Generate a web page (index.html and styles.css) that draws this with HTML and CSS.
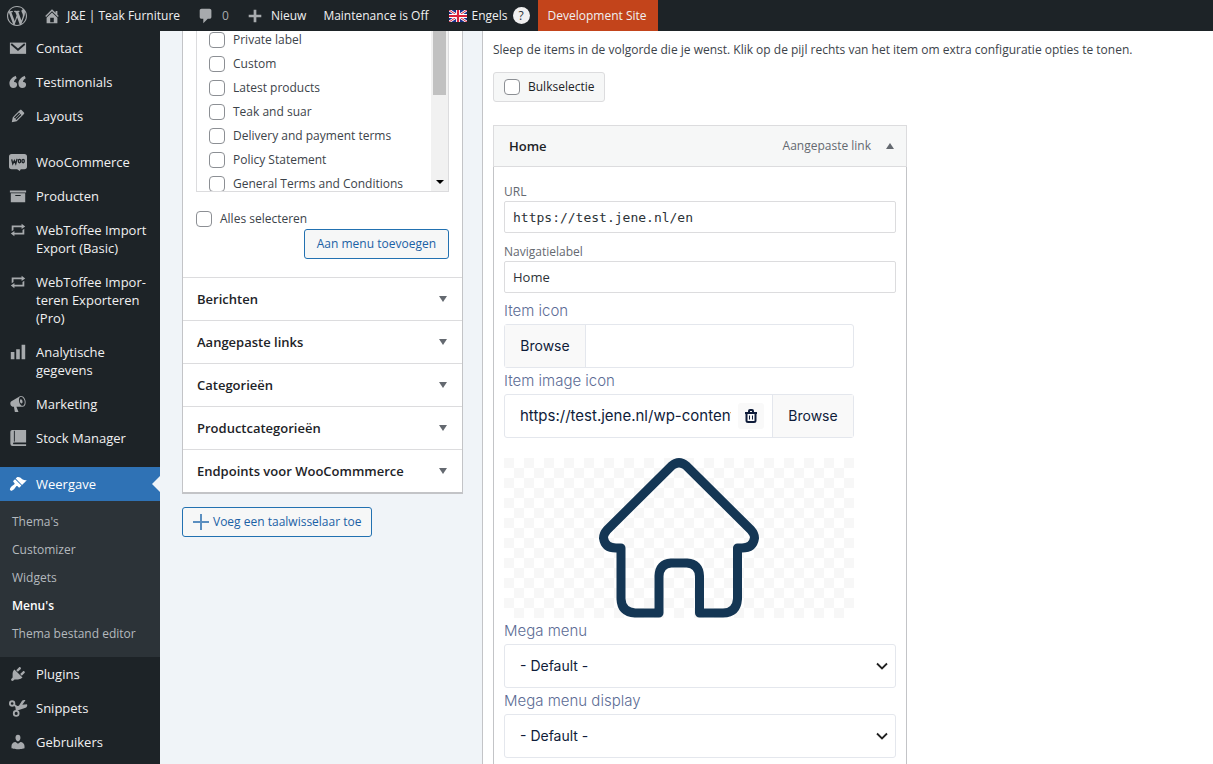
FILE: index.html
```html
<!DOCTYPE html>
<html lang="nl">
<head>
<meta charset="utf-8">
<title>Menu's</title>
<link rel="stylesheet" href="styles.css">
</head>
<body>
<header class="adminbar">
  <a class="bar-item bar-logo" href="#" aria-label="WordPress"><svg class="icon" viewBox="0 0 20 20"><path d="M20 10c0-5.51-4.49-10-10-10C4.48 0 0 4.49 0 10c0 5.52 4.48 10 10 10 5.51 0 10-4.48 10-10zM7.78 15.37L4.37 6.22c.55-.02 1.17-.08 1.17-.08.5-.06.44-1.13-.06-1.11 0 0-1.45.11-2.37.11-.18 0-.37 0-.58-.01C4.12 2.69 6.87 1.11 10 1.11c2.33 0 4.45.87 6.05 2.34-.68-.11-1.65.39-1.65 1.58 0 .74.45 1.36.9 2.1.35.61.55 1.36.55 2.46 0 1.49-1.4 5-1.4 5l-3.03-8.37c.54-.02.82-.17.82-.17.5-.05.44-1.25-.06-1.22 0 0-1.44.12-2.38.12-.87 0-2.33-.12-2.33-.12-.5-.03-.56 1.2-.06 1.22l.92.08 1.26 3.41zM17.41 10c.24-.64.74-1.87.43-4.25.7 1.29 1.05 2.71 1.05 4.25 0 3.29-1.73 6.24-4.4 7.78.97-2.59 1.94-5.2 2.92-7.78zM6.1 18.09C3.12 16.65 1.11 13.53 1.11 10c0-1.3.23-2.48.72-3.59C3.25 10.3 4.67 14.2 6.1 18.09zm4.03-6.63l2.58 6.98c-.86.29-1.76.45-2.71.45-.79 0-1.57-.11-2.29-.33.81-2.38 1.62-4.74 2.42-7.1z"/></svg></a>
  <a class="bar-item bar-site" href="#"><svg class="icon" viewBox="0 0 20 20"><path d="M16 8.5l1.53 1.53-1.06 1.06L10 4.6l-6.47 6.49-1.06-1.06L10 2.5l4 4v-2h2v4zm-6-2.46l6 5.99V18H4v-5.97zM12 17v-5H8v5h4z"/></svg>J&amp;E | Teak Furniture</a>
  <a class="bar-item bar-comments" href="#"><svg class="icon" viewBox="0 0 20 20"><path d="M5 2h9c1.1 0 2 .9 2 2v7c0 1.1-.9 2-2 2h-2l-5 5v-5H5c-1.1 0-2-.9-2-2V4c0-1.1.9-2 2-2z"/></svg><span class="muted">0</span></a>
  <a class="bar-item bar-new" href="#"><svg class="icon" viewBox="0 0 20 20"><path d="M17 8.500v3h-5.500v5.500h-3v-5.500H3v-3h5.500V3h3v5.500z"/></svg>Nieuw</a>
  <a class="bar-item bar-maintenance" href="#">Maintenance is Off</a>
  <a class="bar-item bar-lang" href="#"><svg class="flag" viewBox="0 0 18 12"><path fill="#1b2f8c" d="M0 0h18v12H0z"/><path stroke="#fff" stroke-width="2.600" d="M0 0l18 12M18 0L0 12"/><path stroke="#d8213b" stroke-width="1" d="M0 0l18 12M18 0L0 12"/><path stroke="#fff" stroke-width="4" d="M9 0v12M0 6h18"/><path stroke="#d8213b" stroke-width="2.200" d="M9 0v12M0 6h18"/></svg>Engels<span class="help">?</span></a>
  <a class="bar-item bar-dev" href="#">Development Site</a>
</header>
<div class="shell">
  <nav class="sidebar">
    <ul class="side-list">
      <li><a class="side-item" href="#"><svg class="icon" viewBox="0 0 20 20"><path d="M1 4h18v12.500H1z"/><path class="cut" d="M2.500 5.500L10 12l7.500-6.500"/></svg>Contact</a></li>
      <li><a class="side-item" href="#"><svg class="icon" viewBox="0 0 20 20"><path d="M8.990 13c0-.9-.2-1.500-.6-2-.6-.8-2-1-2.800-.8-.3-1.600 1.200-3.600 3-4.500L7.300 3C3.700 4.700.1 7.700.5 12.100.8 15 2.400 16.700 4.700 16.700c2.500 0 4.290-1.500 4.290-3.700zm10 0c0-.9-.2-1.500-.6-2-.6-.8-2-1-2.800-.8-.3-1.600 1.200-3.600 3-4.500L17.300 3c-3.600 1.700-7.200 4.700-6.800 9.100.3 2.900 1.900 4.600 4.200 4.600 2.500 0 4.290-1.500 4.290-3.700z"/></svg>Testimonials</a></li>
      <li><a class="side-item" href="#"><svg class="icon" viewBox="0 0 20 20"><path d="M13.890 3.390l2.710 2.720c.46.46.42 1.240.03 1.640l-8.010 8.020-5.560 1.160 1.160-5.580s7.600-7.630 7.990-8.030c.39-.39 1.220-.39 1.680.07zm-2.730 2.790l-5.590 5.610 1.110 1.110 5.540-5.650zm-2.970 8.230l5.580-5.600-1.070-1.080-5.590 5.600z"/></svg>Layouts</a></li>
      <li class="sep"><a class="side-item" href="#"><svg class="icon" viewBox="0 0 20 20"><path d="M3 1h14a3 3 0 0 1 3 3v11a3 3 0 0 1-3 3h-4l-1 2-3-2H3a3 3 0 0 1-3-3V4a3 3 0 0 1 3-3z"/><path class="cut woo" d="M3 7l1.200 5L6 8.500 7.500 12 9 6.500"/><ellipse class="cut woo" cx="11.700" cy="9" rx="1.300" ry="2"/><ellipse class="cut woo" cx="15.700" cy="9" rx="1.300" ry="2"/></svg>WooCommerce</a></li>
      <li><a class="side-item" href="#"><svg class="icon" viewBox="0 0 20 20"><path d="M19 4v2H1V4h18zM2 7h16v10H2V7zm11 3V9H7v1h6z"/></svg>Producten</a></li>
      <li><a class="side-item" href="#"><svg class="icon" viewBox="0 0 20 20"><path d="M5 7v3l-2 1.500V5h11V3l4 3.010L14 9V7H5zm10 6v-3l2-1.500V15H6v2l-4-3.010L6 11v2h9z"/></svg>WebToffee Import<br>Export (Basic)</a></li>
      <li><a class="side-item" href="#"><svg class="icon" viewBox="0 0 20 20"><path d="M5 7v3l-2 1.500V5h11V3l4 3.010L14 9V7H5zm10 6v-3l2-1.500V15H6v2l-4-3.010L6 11v2h9z"/></svg>WebToffee Impor-<br>teren Exporteren<br>(Pro)</a></li>
      <li><a class="side-item" href="#"><svg class="icon" viewBox="0 0 20 20"><path d="M18 18V2h-4v16h4zm-6 0V7H8v11h4zm-6 0v-8H2v8h4z"/></svg>Analytische<br>gegevens</a></li>
      <li><a class="side-item" href="#"><svg class="icon" viewBox="0 0 20 20"><path d="M18.150 5.940c.46 1.620.38 3.220-.02 4.480-.42 1.280-1.260 2.180-2.300 2.480-.16.06-.26.06-.4.06-.06.02-.12.02-.18.02-.06.02-.14.02-.22.02h-6.800l2.220 5.500c.02.14-.06.26-.14.34-.08.1-.24.16-.34.16H6.950c-.1 0-.26-.06-.34-.16-.08-.08-.16-.2-.14-.34l-1-5.500H4.250l-.02-.02c-.5.06-1.080-.18-1.540-.62s-.88-1.080-1.060-1.880c-.24-.8-.2-1.560-.02-2.200.18-.62.58-1.080 1.060-1.300l.02-.02 9-5.400c.1-.06.18-.1.24-.16.06-.04.14-.08.24-.12.16-.08.28-.12.5-.18 1.040-.3 2.240.1 3.220.98s1.840 2.240 2.260 3.860zm-2.580 5.980h-.02c.4-.1.74-.34 1.040-.7.58-.7.86-1.760.86-3.040 0-.64-.1-1.300-.28-1.980-.34-1.360-1.020-2.500-1.780-3.240s-1.680-1.100-2.460-.88c-.82.22-1.400.96-1.700 2-.32 1.040-.28 2.360.06 3.720.38 1.360 1 2.500 1.800 3.240.78.740 1.620 1.100 2.480.88zm-2.540-7.080c.22-.04.42-.02.62.04.38.16.76.48 1.020 1s.42 1.200.42 1.780c0 .3-.04.56-.12.8-.18.48-.44.84-.86.94-.34.1-.8-.06-1.140-.4s-.64-.86-.78-1.500c-.18-.62-.12-1.240.02-1.720s.48-.84.82-.94z"/></svg>Marketing</a></li>
      <li><a class="side-item" href="#"><svg class="icon" viewBox="0 0 20 20"><path d="M3.500 1H19v14H5.500a1 1 0 0 0 0 2H19v2H4a2.500 2.500 0 0 1-2.500-2.500V3a2 2 0 0 1 2-2z"/><path class="cut spine" d="M6 2v12"/></svg>Stock Manager</a></li>
      <li class="sep current">
        <a class="side-item active" href="#"><svg class="icon" viewBox="0 0 20 20"><path d="M14.480 11.060L7.410 3.990l1.500-1.500c.5-.56 2.300-.47 3.510.32 1.210.8 1.430 1.280 2.910 2.100 1.180.64 2.450 1.260 4.450.85zm-.71.71L6.700 4.700 4.930 6.470c-.39.39-.39 1.020 0 1.410l1.060 1.060c.39.39.39 1.030 0 1.420-.6.6-1.430 1.110-2.210 1.690-.35.26-.7.53-1.010.84C1.430 14.230.4 16.080 1.400 17.070c.99 1 2.840-.03 4.180-1.360.31-.31.58-.66.85-1.020.57-.78 1.080-1.610 1.690-2.210.39-.39 1.020-.39 1.410 0l1.060 1.060c.39.39 1.020.39 1.410 0z"/></svg>Weergave</a>
        <ul class="submenu">
          <li><a href="#">Thema's</a></li>
          <li><a href="#">Customizer</a></li>
          <li><a href="#">Widgets</a></li>
          <li><a class="selected" href="#">Menu's</a></li>
          <li><a href="#">Thema bestand editor</a></li>
        </ul>
      </li>
      <li><a class="side-item" href="#"><svg class="icon" viewBox="0 0 20 20"><path d="M13.110 4.360L9.870 7.600 8 5.730l3.240-3.240c.35-.34 1.050-.2 1.560.32.52.51.66 1.210.31 1.550zm-8 1.770l.91-1.120 9.010 9.010-1.190.84c-.71.71-2.630 1.160-3.820 1.160H6.140L4.900 17.260c-.59.59-1.540.59-2.120 0-.59-.58-.59-1.530 0-2.120l1.240-1.240v-3.880c0-1.130.4-3.190 1.090-3.890zm7.260 3.970l3.240-3.240c.34-.35 1.040-.21 1.550.31.52.51.66 1.210.31 1.550l-3.240 3.250z"/></svg>Plugins</a></li>
      <li><a class="side-item" href="#"><svg class="icon" viewBox="0 0 20 20"><g fill="none" stroke="#a7aaad" stroke-width="2"><circle cx="3.500" cy="5" r="2.500"/><circle cx="8" cy="16" r="2.700"/><path d="M5.500 6.500L9 9M8.500 13.500l.5-4"/></g><path d="M7 8l4-.5L14.500 2c1-1.200 3-1.300 3.800-.5L14.800 6.500l5.200-.6c.8 1.500-.2 3.400-1.500 3.800l-7.500 2.600-3.500.3z"/></svg>Snippets</a></li>
      <li><a class="side-item" href="#"><svg class="icon" viewBox="0 0 20 20"><path d="M10 9.250c-2.270 0-2.730-3.440-2.730-3.440C7 4.020 7.820 2 9.970 2c2.160 0 2.980 2.020 2.710 3.810 0 0-.41 3.440-2.680 3.440zm0 2.570L12.720 10c2.390 0 4.520 2.330 4.520 4.530v2.490s-3.650 1.130-7.240 1.130c-3.650 0-7.240-1.130-7.240-1.130v-2.490c0-2.250 1.940-4.480 4.470-4.480z"/></svg>Gebruikers</a></li>
    </ul>
  </nav>
  <section class="sources">
    <div class="accordion">
      <div class="panel">
        <div class="picker">
          <div class="picker-items">
            <label class="check"><input type="checkbox">Private label</label>
            <label class="check"><input type="checkbox">Custom</label>
            <label class="check"><input type="checkbox">Latest products</label>
            <label class="check"><input type="checkbox">Teak and suar</label>
            <label class="check"><input type="checkbox">Delivery and payment terms</label>
            <label class="check"><input type="checkbox">Policy Statement</label>
            <label class="check"><input type="checkbox">General Terms and Conditions</label>
          </div>
          <div class="scrollbar"><div class="thumb"></div><svg class="scroll-arrow" viewBox="0 0 8 4"><path d="M0 0h8L4 4z"/></svg></div>
        </div>
        <label class="check select-all"><input type="checkbox">Alles selecteren</label>
        <button class="btn add" type="button">Aan menu toevoegen</button>
      </div>
      <button class="fold" type="button">Berichten<svg class="caret" viewBox="0 0 8 6"><path d="M0 0h8L4 6z"/></svg></button>
      <button class="fold" type="button">Aangepaste links<svg class="caret" viewBox="0 0 8 6"><path d="M0 0h8L4 6z"/></svg></button>
      <button class="fold" type="button">Categorieën<svg class="caret" viewBox="0 0 8 6"><path d="M0 0h8L4 6z"/></svg></button>
      <button class="fold" type="button">Productcategorieën<svg class="caret" viewBox="0 0 8 6"><path d="M0 0h8L4 6z"/></svg></button>
      <button class="fold" type="button">Endpoints voor WooCommmerce<svg class="caret" viewBox="0 0 8 6"><path d="M0 0h8L4 6z"/></svg></button>
    </div>
    <button class="btn switcher" type="button"><svg class="plus" viewBox="0 0 16 16"><path d="M8 0v16M0 8h16"/></svg>Voeg een taalwisselaar toe</button>
  </section>
  <main class="structure">
    <p class="intro">Sleep de items in de volgorde die je wenst. Klik op de pijl rechts van het item om extra configuratie opties te tonen.</p>
    <label class="check bulk"><input type="checkbox">Bulkselectie</label>
    <article class="item">
      <header class="item-head"><strong>Home</strong><span class="item-type">Aangepaste link</span><svg class="caret" viewBox="0 0 8 6"><path d="M0 6h8L4 0z"/></svg></header>
      <div class="item-body">
        <div class="field"><label for="url">URL</label><input class="text mono" id="url" type="text" value="https://test.jene.nl/en"></div>
        <div class="field"><label for="nav">Navigatielabel</label><input class="text" id="nav" type="text" value="Home"></div>
        <div class="theme-field"><label for="icon">Item icon</label>
          <div class="group"><button type="button">Browse</button><input id="icon" type="text"></div>
        </div>
        <div class="theme-field"><label for="image">Item image icon</label>
          <div class="group"><input id="image" type="text" value="https://test.jene.nl/wp-content/uploads/home.png"><span class="trash-cell"><button class="trash" type="button" aria-label="Verwijderen"><svg viewBox="0 0 12 14"><path d="M0 4h12M1.500 4v7.500q0 1.500 1.500 1.500h6q1.500 0 1.500-1.500V4M4 4V2q0-1 1-1h2q1 0 1 1v2"/><path class="bars" d="M4.500 6.500v4M7.500 6.500v4"/></svg></button></span><button type="button">Browse</button></div>
          <div class="preview"><svg viewBox="0 0 160 160"><path d="M73 7.500Q80 2 87 7.500L152 72Q155.500 76 155.500 80Q154 90 143 90H138.500V141Q137.500 155 124 155H100.500V118Q100 106 88 105H72Q60.500 106 60 118V155H36Q22.500 154 22 141V90H17Q6 90 4.500 80Q4.500 76 8 72Z"/></svg></div>
        </div>
        <div class="theme-field"><label for="mega">Mega menu</label>
          <select id="mega"><option>- Default -</option></select></div>
        <div class="theme-field"><label for="display">Mega menu display</label>
          <select id="display"><option>- Default -</option></select></div>
      </div>
    </article>
  </main>
</div>
</body>
</html>
```
FILE: styles.css
```css
* { box-sizing: border-box; }
body {
  margin: 0;
  height: 100vh;
  overflow: hidden;
  display: flex;
  flex-direction: column;
  font: 13px/18px "Open Sans", "Noto Sans", sans-serif;
  color: #3c434a;
  background: #f0f4f8;
}
a { color: inherit; text-decoration: none; }
ul { list-style: none; margin: 0; padding: 0; }
button, input, select { font: inherit; color: inherit; margin: 0; }
.icon { width: 20px; height: 18px; flex: none; fill: #a7aaad; }
.cut { fill: none; stroke: #1d2327; stroke-width: 2; }
.woo { stroke-width: 1.5; }
.spine { stroke-width: 1; }

.adminbar {
  display: flex;
  flex: none;
  height: 31px;
  background: #1d2327;
  color: #f0f0f1;
  font-size: 12px;
  position: relative;
  z-index: 1;
}
.bar-item { display: flex; align-items: center; gap: 6px; padding: 0 8px; white-space: nowrap; }
.bar-logo { padding-left: 7px; }
.bar-logo .icon { height: 20px; }
.bar-site { padding-left: 7px; }
.bar-site, .bar-lang { gap: 5px; }
.bar-new { padding-right: 9px; }
.bar-maintenance { padding-right: 12px; }
.bar-dev { background: #c3441b; padding: 0 11px 0 10px; }
.muted { color: #a7aaad; }
.flag { width: 18px; height: 12px; }
.help {
  width: 17px; height: 17px; border-radius: 50%;
  background: #f0f0f1; color: #2c3338;
  text-align: center; line-height: 17px;
}

.shell { display: flex; flex: 1; min-height: 0; }
.sidebar { width: 160px; flex: none; background: #1d2327; color: #f0f0f1; overflow: hidden; }
.side-item { display: flex; gap: 8px; padding: 8px 0 8px 8px; white-space: nowrap; }
.sep { margin-top: 12px; }
.active { background: #2f72b5; color: #fff; position: relative; }
.active .icon { fill: #fff; }
.active::after {
  content: ""; position: absolute; right: 0; top: 9px;
  border: 8px solid transparent; border-left: 0; border-right-color: #f0f4f8;
}
.submenu { background: #2c3338; padding: 7px 0 9px; font-size: 12px; color: #b4b9be; }
.submenu a { display: block; padding: 5px 12px; }
.submenu .selected { color: #fff; font-weight: 600; }

.sources { width: 322px; flex: none; padding: 0 19px 0 22px; }
.accordion { background: #fff; border: 1px solid #c3c4c7; border-top: 0; border-bottom-width: 2px; }
.panel { padding: 0 13px 18px; display: flex; flex-direction: column; }
.picker { display: flex; border: 1px solid #dcdcde; border-top: 0; height: 161px; overflow: hidden; }
.picker-items { flex: 1; padding-left: 12px; margin-top: -3px; }
.check { display: flex; align-items: center; gap: 8px; height: 24px; font-size: 12px; white-space: nowrap; }
.check input {
  appearance: none; width: 16px; height: 16px; flex: none;
  border: 1px solid #8c8f94; border-radius: 4px; background: #fff;
}
.scrollbar { width: 17px; background: #f1f1f1; display: flex; flex-direction: column; align-items: center; justify-content: space-between; padding-bottom: 7px; }
.thumb { width: 13px; height: 64px; background: #c1c1c1; }
.scroll-arrow { width: 8px; height: 4px; }
.select-all { margin-top: 15px; }
.btn {
  height: 30px; padding: 0 12px; border: 1px solid #2271b1; border-radius: 3px;
  background: #f6f7f7; color: #1a61a5; font-size: 12px; white-space: nowrap;
}
.add { align-self: flex-end; margin-top: -2px; }
.fold {
  display: flex; align-items: center; justify-content: space-between;
  width: 100%; height: 43px; padding: 0 15px 0 14px;
  border: 0; border-top: 1px solid #dcdcde; background: #fff;
  color: #1d2327; font-weight: 600;
}
.caret { width: 8px; height: 6px; fill: #646970; }
.switcher { display: flex; align-items: center; gap: 4px; margin-top: 13px; padding: 0 10px; }
.plus { width: 16px; height: 16px; stroke: #5b8fc0; stroke-width: 2; }

.structure { flex: 1; min-width: 0; background: #fff; border-left: 1px solid #c3c4c7; padding: 10px; }
.intro { margin: 0 0 13px; font-size: 12px; white-space: nowrap; }
.bulk {
  width: max-content; height: 30px; padding: 0 10px;
  border: 1px solid #dcdcde; border-radius: 3px; background: #f6f7f7; color: #1d2327;
}
.item { max-width: 414px; margin-top: 23px; }
.item-head {
  display: flex; align-items: center; height: 42px; padding: 0 12px 0 15px;
  background: #f6f7f7; border: 1px solid #dcdcde; color: #1d2327;
}
.item-head strong { font-weight: 600; flex: 1; }
.item-type { font-size: 12px; color: #646970; margin-right: 15px; }
.item-body { border: 1px solid #c3c4c7; border-top: 0; padding: 16px 10px 20px; }
.field { margin-bottom: 10px; }
.field:nth-child(2) { margin-bottom: 8px; }
.field label { display: block; font-size: 12px; color: #646970; }
.field .text {
  display: block; width: 100%; height: 32px; padding: 0 8px;
  border: 1px solid #dcdcde; border-radius: 2px; background: #fff; color: #2c3338;
}
.field .mono { font-family: "DejaVu Sans Mono", monospace; }
.theme-field { font: 300 15px/20px Inter, sans-serif; margin-bottom: 3px; }
.theme-field label { display: block; color: #5c6c95; padding-bottom: 3px; }
.group {
  display: flex; width: 350px; max-width: 100%; height: 44px;
  border: 1px solid #e4e7ed; border-radius: 3px; color: #0f1c3a; font-weight: 400;
}
.group input { flex: 1; min-width: 0; border: 0; padding: 0 0 0 15px; background: none; }
.group > button { width: 81px; border: 0; background: #f9f9f9; font-size: 14px; }
.group > button:first-child { border-right: 1px solid #e4e7ed; }
.group > button:last-child { border-left: 1px solid #e4e7ed; }
.trash-cell { display: flex; align-items: center; padding: 0 8px 0 7px; }
.trash { width: 26px; height: 26px; padding: 0; border: 0; border-radius: 3px; background: #f9f9f9; display: grid; place-items: center; }
.trash svg { width: 12px; height: 14px; fill: none; stroke: #0f1c3a; stroke-width: 2; }
.trash .bars { stroke-width: 1; }
.preview {
  width: 350px; max-width: 100%; height: 160px; margin-top: 20px;
  background: repeating-conic-gradient(#fff 0 25%, #f7f7f7 0 50%) 0 0 / 20px 20px;
  text-align: center;
}
.preview svg { height: 160px; fill: none; stroke: #143654; stroke-width: 9; stroke-linejoin: round; }
select {
  appearance: none; display: block; width: 100%; height: 44px; padding: 0 15px;
  border: 1px solid #e4e7ed; border-radius: 3px; color: #0f1c3a;
  background: #fff url("data:image/svg+xml,%3Csvg xmlns='http://www.w3.org/2000/svg' viewBox='0 0 12 8'%3E%3Cpath d='M1 1.500l5 5 5-5' fill='none' stroke='%23222' stroke-width='1.800'/%3E%3C/svg%3E") right 7px center / 12px 8px no-repeat;
}
.theme-field select { font-size: 14px; font-weight: 400; }
```
